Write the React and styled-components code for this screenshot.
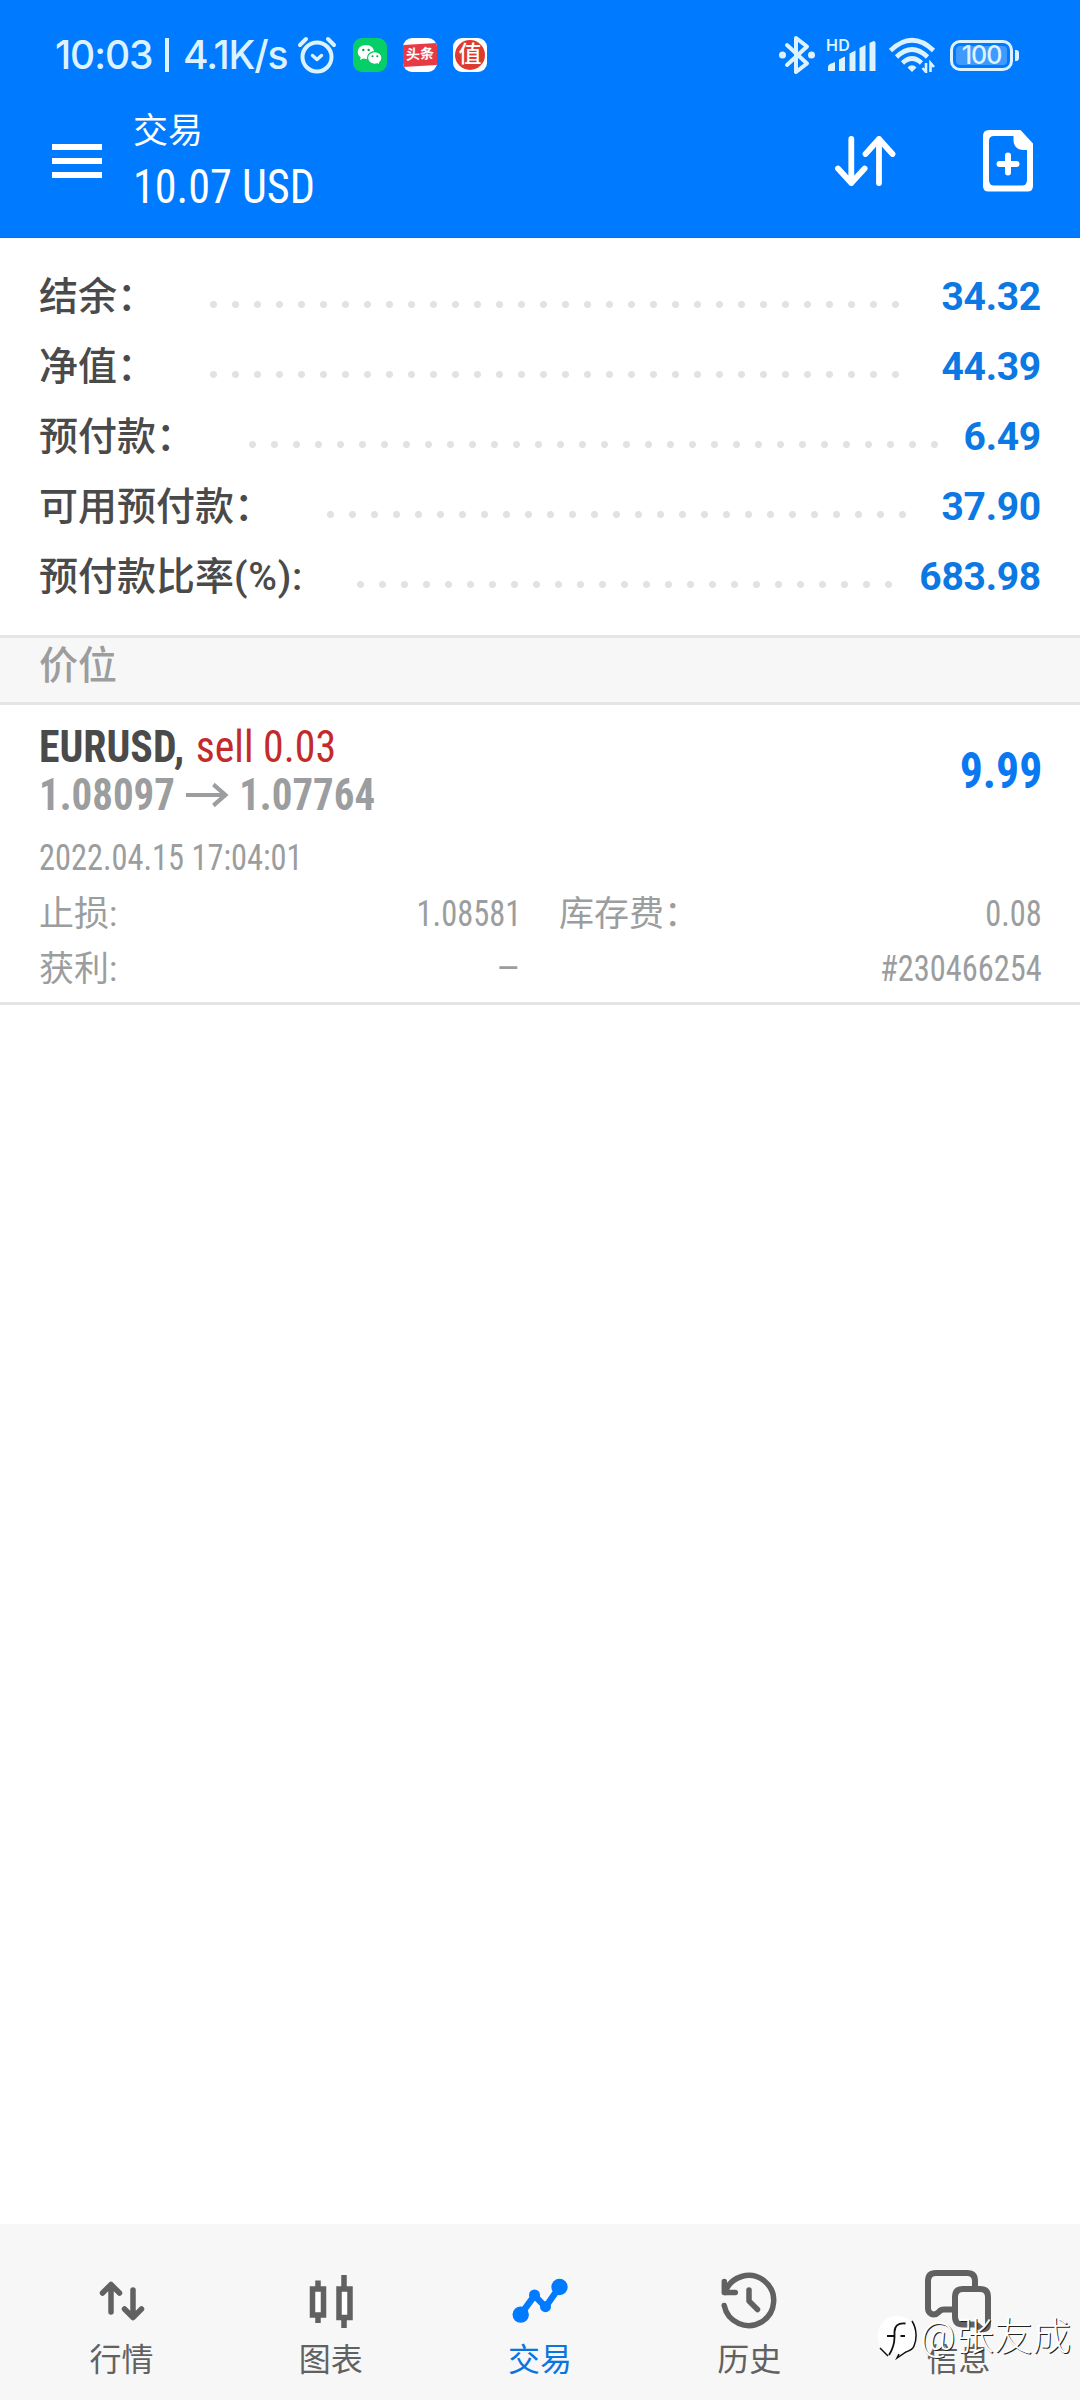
// App.jsx
import React from 'react';
import styled, { createGlobalStyle } from 'styled-components';

const GlobalStyle = createGlobalStyle`
  * {
    box-sizing: border-box;
  }

  body {
    margin: 0;
    background: #ffffff;
    font-family: Roboto, 'Noto Sans CJK SC', sans-serif;
  }

  svg {
    display: block;
    flex: none;
  }
`;

const Screen = styled.div`
  position: relative;
  width: 1080px;
  height: 2400px;
  display: flex;
  flex-direction: column;
  overflow: hidden;
  background: #ffffff;
`;

// Condensed text, squeezed a little more from the side it is aligned to
const Condensed = styled.span`
  display: inline-flex;
  align-items: center;
  font-stretch: 75%;
  transform: scaleX(${({ $scale }) => $scale || 0.9});
  transform-origin: ${({ $align }) => $align || 'left'} center;
`;

// Blue area: system status bar + app bar
const TopArea = styled.header`
  height: 238px;
  background: #007aff;
  border-bottom: 1px solid #0a6fd6;
  color: #ffffff;
`;

const StatusBar = styled.div`
  height: 100px;
  padding: 10px 61px 0 55px;
  display: flex;
  align-items: center;
  justify-content: space-between;
  color: #dcf3ff;
`;

const StatusGroup = styled.div`
  display: flex;
  align-items: center;
`;

const StatusText = styled.span`
  width: ${({ $width }) => $width}px;
  font-family: Inter, sans-serif;
  font-size: 39px;
  font-weight: 500;
  line-height: 48px;
  letter-spacing: -1.1px;
  white-space: nowrap;
`;

const StatusDivider = styled.span`
  width: 4px;
  height: 34px;
  margin-right: 14px;
  background: #dcf3ff;
`;

const AppBadge = styled.span`
  width: 34px;
  height: 34px;
  margin-left: 16px;
  border-radius: 9px;
  overflow: hidden;
  display: flex;
  align-items: center;
  justify-content: center;
  background: ${({ $color }) => $color || '#ffffff'};
`;

const NewsLabel = styled.span`
  width: 34px;
  height: 22px;
  background: #e83a44;
  color: #ffffff;
  font-size: 14px;
  font-weight: 700;
  line-height: 21px;
  text-align: center;
  transform: skewY(-3deg);
`;

const RoundLabel = styled.span`
  width: 30px;
  height: 30px;
  border-radius: 50%;
  background: #dd3a30;
  color: #ffffff;
  font-size: 23px;
  font-weight: 500;
  line-height: 29px;
  text-align: center;
`;

const Signal = styled.div`
  width: 50px;
  height: 34px;
  margin: 0 13px 0 11px;
  display: grid;

  > * {
    grid-area: 1 / 1;
  }
`;

const HdLabel = styled.span`
  font-family: Inter, sans-serif;
  font-size: 16px;
  font-weight: 600;
  line-height: 14px;
  letter-spacing: 0.3px;
`;

const Battery = styled.div`
  width: 63px;
  height: 31px;
  margin-left: 14px;
  padding: 3px;
  border: 3px solid #dcf3ff;
  border-radius: 10px;
`;

const BatteryLevel = styled.div`
  height: 19px;
  border-radius: 4px;
  background: #3f9aff;
  font-family: Inter, sans-serif;
  font-size: 25px;
  font-weight: 500;
  line-height: 19px;
  letter-spacing: -1px;
  text-align: center;
`;

const BatteryTip = styled.span`
  width: 4px;
  height: 11px;
  margin-left: 2px;
  border-radius: 0 3px 3px 0;
  background: #dcf3ff;
`;

const AppBar = styled.div`
  height: 137px;
  padding: 0 47px 0 52px;
  display: flex;
  align-items: flex-start;
`;

const MenuButton = styled.button`
  width: 50px;
  margin-top: 44px;
  padding: 0;
  border: none;
  background: none;
  display: flex;
  flex-direction: column;
  gap: 8px;

  span {
    width: 50px;
    height: 6px;
    background: #ffffff;
  }
`;

const Titles = styled.div`
  margin-left: 31px;
  flex: 1;
`;

const Title = styled.div`
  height: 61px;
  font-size: 35px;
  line-height: 63px;
`;

const Profit = styled.div`
  height: 52px;
  font-size: 48px;
  line-height: 52px;
`;

const Actions = styled.div`
  margin-top: 30px;
  display: flex;
  align-items: center;
  gap: 87px;
`;

const Summary = styled.section`
  height: 397px;
  padding: 23px 39px 0;
`;

const SummaryRow = styled.div`
  height: 70px;
  padding-top: 3px;
  display: flex;
  align-items: center;
  line-height: 67px;
`;

const SummaryLabel = styled.span`
  font-size: 39px;
  font-weight: 500;
  color: #4a4a4b;
  white-space: nowrap;
`;

const Unit = styled.span`
  letter-spacing: 0.7px;
`;

// Dotted leader between label and value
const Leader = styled.span`
  width: ${({ $dots }) => $dots * 22}px;
  height: 7px;
  margin: 13px 0 0 54px;
  background: radial-gradient(circle at 3.5px 3.5px, #e2e2e2 3.1px, transparent 3.9px) 0 0 / 22px 7px repeat-x;
`;

const SummaryValue = styled.span`
  margin-left: auto;
  font-size: 39px;
  font-weight: 700;
  letter-spacing: -0.25px;
  color: #0b78e3;
`;

const SectionBar = styled.div`
  height: 70px;
  padding: 0 39px;
  border-top: 3px solid #e5e5e5;
  border-bottom: 3px solid #e5e5e5;
  background: #f7f7f7;
  color: #9b9d9e;
  font-size: 39px;
  font-weight: 500;
  line-height: 56px;
`;

const Position = styled.section`
  height: 300px;
  padding: 18px 38px 0 39px;
  border-bottom: 3px solid #e5e5e5;
  color: #9b9d9e;
`;

const PositionHead = styled.div`
  height: 96px;
  display: flex;
  align-items: center;
  justify-content: space-between;
`;

const Line = styled.div`
  height: 48px;
  font-size: 44px;
  font-weight: 700;
  line-height: 48px;
`;

const SymbolName = styled.span`
  color: #4a4a4b;
`;

const Side = styled.span`
  margin-left: 12px;
  color: #c42a2a;
  font-weight: 400;
`;

const PositionProfit = styled.div`
  color: #0a78f0;
  font-size: 50px;
  font-weight: 700;
`;

const OpenTime = styled.div`
  margin-top: 12px;
  height: 55px;
  font-size: 36px;
  line-height: 55px;
`;

const Details = styled.div`
  display: grid;
  grid-template-columns: 482px 483px;
  column-gap: 38px;
`;

const Detail = styled.div`
  height: 55px;
  display: flex;
  justify-content: space-between;
  font-size: 36px;
  line-height: 56px;
`;

const DetailLabel = styled.span`
  padding-top: 1px;
  font-size: 35px;
`;

const TabBar = styled.nav`
  height: 176px;
  margin-top: auto;
  padding: 0 17px;
  display: flex;
  background: #f7f7f7;
`;

const Tab = styled.a`
  flex: 1;
  padding-top: 41px;
  display: flex;
  flex-direction: column;
  align-items: center;
  color: ${({ $active }) => ($active ? '#0a75e0' : '#616161')};
`;

const TabLabel = styled.span`
  font-size: 32px;
  line-height: 40px;
`;

// Author mark laid over the tab bar
const AuthorMark = styled.div`
  position: absolute;
  right: 9px;
  bottom: 38px;
  display: flex;
  align-items: center;
  color: #ffffff;
  font-size: 38.5px;
  font-weight: 300;
  line-height: 50px;
  text-shadow: 1px 1px 0 #222222;
`;

const AlarmIcon = () => (
  <svg width="40" height="38" viewBox="0 0 40 38" fill="none" stroke="currentColor" strokeWidth="4" strokeLinecap="round" strokeLinejoin="round">
    <circle cx="20" cy="21" r="14.5" />
    <path d="M3 9 9 3M37 9 31 3" />
    <path d="m15.5 19.5 4.5 4 4.5-4" strokeWidth="3.4" />
  </svg>
);

const WechatIcon = () => (
  <svg width="34" height="34" viewBox="0 0 34 34">
    <path fill="#fff" d="M13 7C8 7 4.8 10.200 4.800 14c0 2.200 1.100 4 2.900 5.300L7 22l3-1.600c1 .3 2 .5 3.200.5C18 20.900 21 18 21 14S18 7 13 7Z" />
    <path fill="#fff" stroke="#07c765" strokeWidth="1.200" d="M21.800 13.700c-4.200 0-7.300 2.800-7.300 6.300s3.100 6.300 7.300 6.300c1 0 1.900-.2 2.700-.4l2.500 1.500-.6-2.500c1.700-1.200 2.600-2.900 2.600-4.900 0-3.500-3-6.300-7.200-6.300Z" />
    <g fill="#07a552">
      <circle cx="10.300" cy="12" r="1.200" />
      <circle cx="15.700" cy="12" r="1.200" />
      <circle cx="19.500" cy="18.300" r="1" />
      <circle cx="24.300" cy="18.300" r="1" />
    </g>
  </svg>
);

const BluetoothIcon = () => (
  <svg width="36" height="40" viewBox="0 0 36 40" fill="none" stroke="currentColor" strokeWidth="4" strokeLinejoin="round" strokeLinecap="round">
    <path d="M8 10 28 28.500 17 37V3l11 8.500L8 30" />
    <circle cx="3.500" cy="20" r="3.500" fill="currentColor" stroke="none" />
    <circle cx="32.500" cy="20" r="3.500" fill="currentColor" stroke="none" />
  </svg>
);

const SignalBars = () => (
  <svg width="50" height="34" viewBox="0 0 50 34" fill="currentColor">
    <path d="M2 33v-4q0-2 2-3l5-2v8q0 1-1 1Z" />
    <path d="M13 33V21.500l6-3V33Z" />
    <path d="M23.500 33V15.500l6-3V33Z" />
    <path d="M33.500 33V10l6-3V33Z" />
    <path d="M43.500 33V5l4-2q2 0 2 2v28Z" />
  </svg>
);

const WifiIcon = () => (
  <svg width="47" height="36" viewBox="0 0 47 36" fill="none" stroke="currentColor" strokeWidth="4.600">
    <path d="M1.500 13.500Q23 -7 44.500 13.500" />
    <path d="M7.500 20Q23 5 38.500 20" />
    <path d="M13.500 26Q23 17 32.500 26" />
    <path d="M18.500 30.500Q23 26 27.500 30.500L23 35Z" fill="currentColor" stroke="none" />
    <path d="M37 26v9l-3.500-4M41.500 35v-9l3.500 4" strokeWidth="2.600" />
  </svg>
);

const SortIcon = () => (
  <svg width="62" height="62" viewBox="834 130 62 62" fill="none" stroke="currentColor" strokeWidth="5.800" strokeLinecap="round" strokeLinejoin="round">
    <path d="M851.300 139v44M838 168.500l13.300 14.500 13.300-14.500" />
    <path d="M879 183v-44M865.500 154l13.500-15 13.500 15" />
  </svg>
);

const NewOrderIcon = () => (
  <svg width="50" height="62" viewBox="983 130 50 62" fill="currentColor">
    <path
      fillRule="evenodd"
      d="M989 130h31.500L1033 143.500V186q0 5.500-5.500 5.500h-39q-5.500 0-5.500-5.500v-50q0-6 6-6Zm5 6q-5 0-5 5v39q0 5.500 5 5.500h28q5 0 5-5.500v-30h-4q-9.500-1-9.500-10v-4Z"
    />
    <path d="M1008 155.500v17M999.500 164h17" stroke="currentColor" strokeWidth="6" strokeLinecap="round" />
  </svg>
);

const PriceArrow = () => (
  <svg width="69" height="48" viewBox="0 0 69 48" fill="none" stroke="currentColor" strokeWidth="4.200">
    <path d="M12 24h42M41.500 13.500 54.500 24l-13 10.500" />
  </svg>
);

const QuotesIcon = () => (
  <svg width="74" height="75" viewBox="85 2265 74 75" fill="none" stroke="currentColor" strokeWidth="5.500" strokeLinecap="round" strokeLinejoin="round">
    <path d="M111 2312v-27M102.500 2293l8.500-8.500 8.500 8.500" />
    <path d="M133 2290v27M124.500 2309l8.500 8.500 8.500-8.500" />
  </svg>
);

const ChartIcon = () => (
  <svg width="74" height="75" viewBox="294 2265 74 75" fill="#fff" stroke="currentColor" strokeWidth="5.500">
    <path d="M318 2280.500v42.500M344 2275v53" />
    <path d="M312.500 2289h11v26h-11ZM339 2289h11v28.500h-11Z" />
  </svg>
);

const TradeIcon = () => (
  <svg width="74" height="75" viewBox="503 2265 74 75" fill="#007aff">
    <path d="m520.700 2314.500 13.800-19 11 11.500 14-20" fill="none" stroke="#007aff" strokeWidth="6.500" />
    <circle cx="520.700" cy="2314.600" r="8.200" />
    <circle cx="534.500" cy="2295" r="5.500" />
    <circle cx="545.500" cy="2306.700" r="5.500" />
    <circle cx="559.500" cy="2287" r="8.200" />
  </svg>
);

const HistoryIcon = () => (
  <svg width="74" height="75" viewBox="712 2265 74 75" fill="none" stroke="currentColor" strokeWidth="5.500" strokeLinecap="round" strokeLinejoin="round">
    <path d="M725 2292.500a25 25 0 1 1-.8 13" />
    <path d="M724.300 2281.500v11h11" />
    <path d="M749 2290v11l8.500 8.500" />
  </svg>
);

const MessagesIcon = () => (
  <svg width="74" height="75" viewBox="921 2265 74 75" fill="none" stroke="currentColor" strokeWidth="6" strokeLinecap="round" strokeLinejoin="round">
    <path d="M955 2309.500h-11q-3 0-5 2.300-4 4-8 2-3-1.800-3-5.800v-27q0-8 8-8h31q8 0 8 8v8" />
    <path d="M963 2289h17q8 0 8 8v27q0 4-3 5-3 1-6-2-2-2.500-5-2.500h-11q-8 0-8-8V2297q0-8 8-8Z" />
  </svg>
);

const AuthorLogo = () => (
  <svg width="43" height="46" viewBox="1 0 43 46" fill="none">
    <path d="M21 2c11 0 19 8 19 19 0 9-3 15-9 16.500L22 44l1-6q-4 1-8-1l-3 5C5 38 2 30 2 21 2 10 10 2 21 2Z" fill="#fff" />
    <path d="M36 7c5 8 5 18 2 25-1.500 4-5 5-8 6l-9 6 2-4M4 34l8 8" stroke="#111" strokeWidth="1.500" />
    <path d="M29.500 9.500c-8-1-11 3-11 8.500v5M11 22h7.500M24.500 22h4.500M18.500 23c0 7-1 11-5.500 18" stroke="#111" strokeWidth="1.800" />
  </svg>
);

const summary = [
  { label: '结余：', dots: 32, value: '34.32' },
  { label: '净值：', dots: 32, value: '44.39' },
  { label: '预付款：', dots: 32, value: '6.49' },
  { label: '可用预付款：', dots: 27, value: '37.90' },
  { label: '预付款比率', unit: '(%):', dots: 25, value: '683.98' },
];

const tabs = [
  { label: '行情', Icon: QuotesIcon },
  { label: '图表', Icon: ChartIcon },
  { label: '交易', Icon: TradeIcon, active: true },
  { label: '历史', Icon: HistoryIcon },
  { label: '信息', Icon: MessagesIcon },
];

const App = () => {
  return (
    <Screen lang="zh-CN">
      <GlobalStyle />
      <TopArea>
        <StatusBar>
          <StatusGroup>
            <StatusText $width={110}>10:03</StatusText>
            <StatusDivider />
            <StatusText $width={114}>4.1K/s</StatusText>
            <AlarmIcon />
            <AppBadge $color="#07cf68"><WechatIcon /></AppBadge>
            <AppBadge><NewsLabel>头条</NewsLabel></AppBadge>
            <AppBadge><RoundLabel>值</RoundLabel></AppBadge>
          </StatusGroup>
          <StatusGroup>
            <BluetoothIcon />
            <Signal>
              <SignalBars />
              <HdLabel>HD</HdLabel>
            </Signal>
            <WifiIcon />
            <Battery>
              <BatteryLevel>100</BatteryLevel>
            </Battery>
            <BatteryTip />
          </StatusGroup>
        </StatusBar>
        <AppBar>
          <MenuButton aria-label="菜单">
            <span />
            <span />
            <span />
          </MenuButton>
          <Titles>
            <Title>交易</Title>
            <Profit>
              <Condensed $scale={0.92}>10.07 USD</Condensed>
            </Profit>
          </Titles>
          <Actions>
            <SortIcon />
            <NewOrderIcon />
          </Actions>
        </AppBar>
      </TopArea>

      <Summary>
        {summary.map(({ label, unit, dots, value }) => (
          <SummaryRow key={label}>
            <SummaryLabel>
              {label}
              {unit && <Unit>{unit}</Unit>}
            </SummaryLabel>
            <Leader $dots={dots} />
            <SummaryValue>{value}</SummaryValue>
          </SummaryRow>
        ))}
      </Summary>

      <SectionBar>价位</SectionBar>

      <Position>
        <PositionHead>
          <div>
            <Line>
              <Condensed $scale={0.95}>
                <SymbolName>EURUSD,</SymbolName>
                <Side>sell 0.03</Side>
              </Condensed>
            </Line>
            <Line>
              <Condensed $scale={0.93}>
                <span>1.08097</span>
                <PriceArrow />
                <span>1.07764</span>
              </Condensed>
            </Line>
          </div>
          <PositionProfit>
            <Condensed $scale={0.915} $align="right">9.99</Condensed>
          </PositionProfit>
        </PositionHead>
        <OpenTime>
          <Condensed>2022.04.15 17:04:01</Condensed>
        </OpenTime>
        <Details>
          <Detail>
            <DetailLabel>止损:</DetailLabel>
            <Condensed $align="right">1.08581</Condensed>
          </Detail>
          <Detail>
            <DetailLabel>库存费：</DetailLabel>
            <Condensed $align="right">0.08</Condensed>
          </Detail>
          <Detail>
            <DetailLabel>获利:</DetailLabel>
            <Condensed $align="right" $scale={1.2}>–</Condensed>
          </Detail>
          <Detail>
            <DetailLabel />
            <Condensed $align="right">#230466254</Condensed>
          </Detail>
        </Details>
      </Position>

      <TabBar>
        {tabs.map(({ label, Icon, active }) => (
          <Tab key={label} $active={active}>
            <Icon />
            <TabLabel>{label}</TabLabel>
          </Tab>
        ))}
      </TabBar>

      <AuthorMark>
        <AuthorLogo />
        <span>@张友成</span>
      </AuthorMark>
    </Screen>
  );
};

export default App;
